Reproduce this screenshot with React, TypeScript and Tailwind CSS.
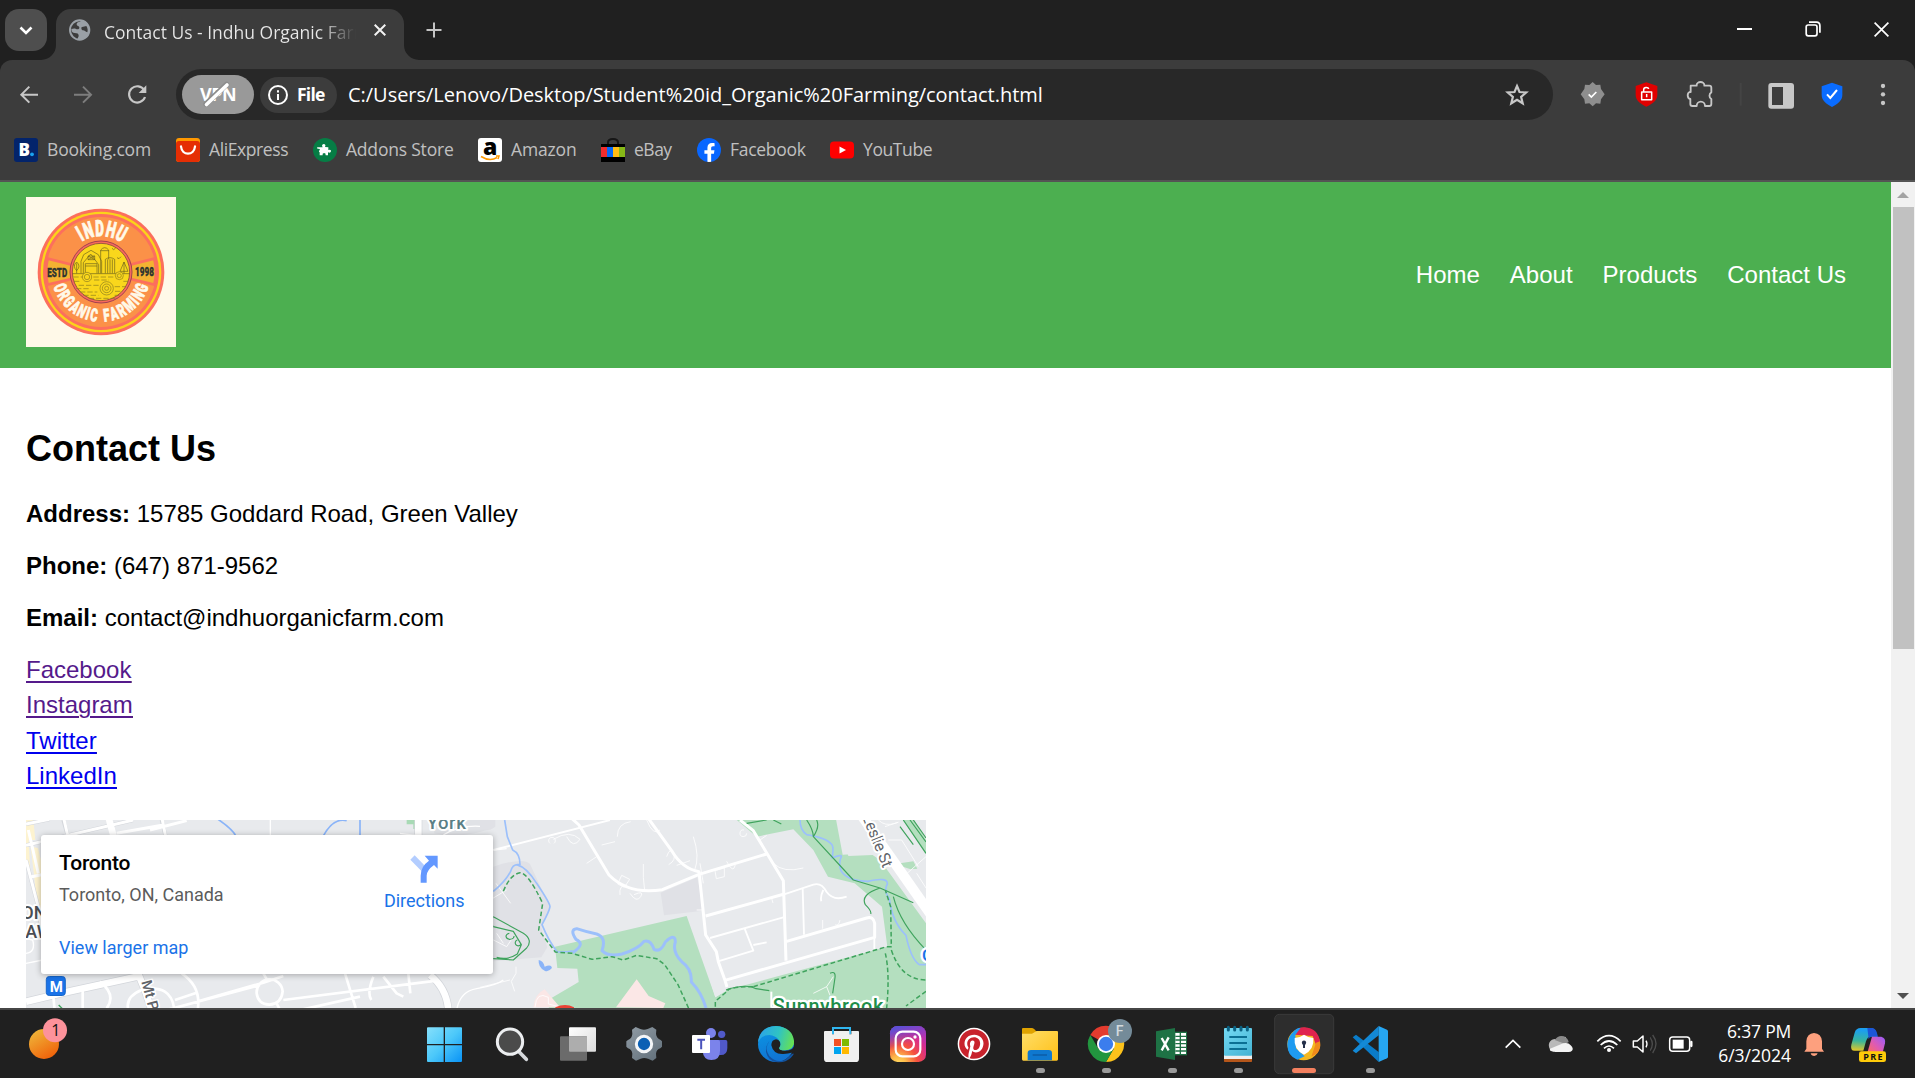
import type { ReactNode } from "react";
import { FaFacebookF, FaPinterest } from "react-icons/fa";

function Cell({ x, y = 30, w = 198, h = 204, className, children }: { x: number; y?: number; w?: number; h?: number; className: string; children: ReactNode }) {
  return (
    <svg viewBox={`${x} ${y} ${w} ${h}`} className={`block shrink-0 ${className}`} fill="none">
      {children}
    </svg>
  );
}

function TabStrip() {
  return (
    <div className="flex h-[60px] bg-[#202020] pl-[5px] pt-[9px]">
      <div className="flex h-[42px] w-[42px] items-center justify-center rounded-[14px] bg-[#4e4e4e]">
        <svg viewBox="0 0 14 9" className="h-[9px] w-[14px]" fill="none" stroke="#fff" strokeWidth="2.6"><path d="M1.5 1.5 7 7l5.500-5.500" /></svg>
      </div>
      <div className="relative ml-[9px] flex h-[51px] w-[348px] items-start rounded-t-[15px] bg-[#3c3c3c]">
        <svg viewBox="0 0 15 15" className="absolute -left-[15px] bottom-0 h-[15px] w-[15px]" fill="#3c3c3c"><path d="M15 0v15H0A15 15 0 0 0 15 0Z" /></svg>
        <svg viewBox="0 0 15 15" className="absolute -right-[15px] bottom-0 h-[15px] w-[15px]" fill="#3c3c3c"><path d="M0 0v15h15A15 15 0 0 1 0 0Z" /></svg>
        <svg viewBox="208 57 66 66" className="ml-[13px] mt-[10px] h-[22px] w-[22px]" fill="none">
          <circle cx="240" cy="90" r="29" stroke="#9aa0a6" strokeWidth="6" />
          <path d="M247 61c-4 6-16 4-16 12 0 6 8 4 8 10 0 5-6 6-10 4-5-3-9-1-14 0 0 8 4 12 10 12 8 0 12 2 12 8 0 4-4 6-3 12 20 2 35-12 35-29s-8-26-22-29Zm0 20c5 0 9-3 13-3 4 5 5 14 3 19-6-2-8-6-13-6-4 0-7-8-3-10Z" fill="#9aa0a6" />
        </svg>
        <div className="ml-[13px] mt-[9px] h-[30px] w-[252px] overflow-hidden whitespace-nowrap bg-gradient-to-r from-[#e8e8e8] from-85% to-transparent to-100% bg-clip-text text-[17.5px] leading-[28px] text-transparent">
          Contact Us - Indhu Organic Farm
        </div>
        <svg viewBox="0 0 12 12" className="ml-[18px] mt-[15px] h-[12px] w-[12px]" stroke="#f2f2f2" strokeWidth="2"><path d="m.7.7 10.600 10.600M11.300.7.7 11.300" /></svg>
      </div>
      <svg viewBox="0 0 16 16" className="ml-[22px] mt-[13px] h-[16px] w-[16px]" stroke="#c4c4c4" strokeWidth="2"><path d="M8 .5v15M.5 8h15" /></svg>
      <div className="ml-auto mr-[26px] mt-[11px] flex h-[18px] items-center gap-[53px] text-white">
        <svg viewBox="0 0 15 16" className="h-[16px] w-[15px]" stroke="currentColor" strokeWidth="2"><path d="M0 8h15" /></svg>
        <svg viewBox="0 0 16 16" className="h-[16px] w-[16px]" stroke="currentColor" strokeWidth="1.7" fill="none"><rect x="1.200" y="4" width="10.800" height="10.800" rx="2" /><path d="M4 1.200h7.500A3.500 3.500 0 0 1 14.900 4.700v7" /></svg>
        <svg viewBox="0 0 15 15" className="h-[15px] w-[15px]" stroke="currentColor" strokeWidth="1.7"><path d="m.6.6 13.800 13.800M14.400.6.6 14.400" /></svg>
      </div>
    </div>
  );
}

function Toolbar() {
  return (
    <div className="flex h-[69px] rounded-t-[12px] bg-[#3c3c3c]">
      <Cell x={0} y={180} w={195} h={207} className="h-[69px] w-[65px]"><path d="M114 284H66M88 260l-24 24 24 24" stroke="#c7c7c7" strokeWidth="6" /></Cell>
      <Cell x={195} y={180} w={150} h={207} className="h-[69px] w-[50px]"><path d="M222 284h48M249 260l24 24-24 24" stroke="#7d7d7d" strokeWidth="6" /></Cell>
      <Cell x={345} y={180} w={183} h={207} className="h-[69px] w-[61px]"><path d="M433 271a24.500 24.500 0 1 0 2 20" stroke="#c7c7c7" strokeWidth="6.500" /><path d="M439 256v23h-23Z" fill="#c7c7c7" /></Cell>
      <div className="mt-[9px] flex h-[51px] w-[1377px] items-center rounded-full bg-[#282828] pl-[6px]">
        <div className="relative flex h-[39px] w-[72px] items-center justify-center rounded-full bg-[#999] text-[18px] font-bold tracking-[-0.55px] text-white">
          VPN
          <svg viewBox="0 0 72 39" className="absolute inset-0 h-full w-full" strokeLinecap="round"><path d="M24 29 44.500 9.500" stroke="#8c8c8c" strokeWidth="5.500" /><path d="M24.500 29.500 45 10" stroke="#fff" strokeWidth="3.600" /></svg>
        </div>
        <div className="ml-[6px] flex h-[36px] w-[77px] items-center gap-[9px] rounded-full bg-[#3c3c3c] pl-[8px]">
          <svg viewBox="0 0 20 20" className="h-5 w-5" fill="none" stroke="#fff" strokeWidth="2"><circle cx="10" cy="10" r="9" /><path d="M10 9v6M10 5.200v2.200" /></svg>
          <span className="text-[17.5px] font-bold tracking-[-0.78px] text-white">File</span>
        </div>
        <span className="ml-[11px] whitespace-nowrap text-[20px] tracking-[-0.03px] text-white">C:/Users/Lenovo/Desktop/Student%20id_Organic%20Farming/contact.html</span>
        <svg viewBox="0 0 24 24" className="ml-auto mr-[24px] h-[24px] w-[24px]" fill="none" stroke="#c7c7c7" strokeWidth="2.200"><path d="m12 3 2.500 6 6.700.5-5.100 4.300 1.600 6.500L12 16.800l-5.700 3.500 1.600-6.500L2.800 9.500 9.500 9Z" /></svg>
      </div>
      <div className="ml-[13px] flex">
        <Cell x={228} y={0} w={162} h={207} className="h-[69px] w-[54px]">
          <path d="m308 66 10 9 13-1 2 13 11 16-11 15-2 13-13-1-10 9-10-9-13 1-2-13-11-15 11-16 2-13 13 1Z" fill="#8e8e8e" />
          <path d="m296 103 8 8 15-15" stroke="#fff" strokeWidth="5" />
        </Cell>
        <Cell x={390} y={0} w={162} h={207} className="h-[69px] w-[54px]">
          <path d="m469 67 33 11v26c0 18-16 28-33 36-17-8-32-18-32-36V78Z" fill="#e00000" />
          <path d="M455 96h30v23h-30ZM461 96v-7c0-8 14-8 15-2M470 102v10" stroke="#fff" strokeWidth="4.500" strokeLinejoin="round" />
        </Cell>
        <Cell x={555} y={0} w={162} h={207} className="h-[69px] w-[54px]">
          <path d="M605 77h18v-2a11.500 9 0 0 1 23 0v2h15q6 0 6 6v14a9.500 11 0 0 0 0 20v15q0 6-6 6h-13a11.500 12 0 0 0-25 0h-13q-6 0-6-6v-15a9.500 11 0 0 1-2-21h3Z" stroke="#c7c7c7" strokeWidth="5.500" strokeLinejoin="round" />
        </Cell>
        <Cell x={714} y={0} w={78} h={207} className="h-[69px] w-[26px]"><path d="M752 69v68" stroke="#444" strokeWidth="6" /></Cell>
        <Cell x={792} y={0} w={162} h={207} className="h-[69px] w-[54px]"><rect x="835" y="69" width="77" height="77" rx="9" fill="#c7c7c7" /><path d="M846 81h33v54h-33Z" fill="#3c3c3c" /></Cell>
        <Cell x={954} y={0} w={144} h={207} className="h-[69px] w-[48px]"><path d="m1026 68 31 11v26c0 16-13 26-31 36-18-10-31-20-31-36V79Z" fill="#0a6cff" /><path d="m1011 103 10 11 20-24" stroke="#fff" strokeWidth="6" /></Cell>
        <Cell x={1098} y={0} w={162} h={207} className="h-[69px] w-[54px]"><g fill="#c7c7c7"><circle cx="1179" cy="78" r="6.500" /><circle cx="1179" cy="103" r="6.500" /><circle cx="1179" cy="129" r="6.500" /></g></Cell>
      </div>
    </div>
  );
}

const bookmarks: { label: string; style: string; icon: ReactNode }[] = [
  { label: "Booking.com", style: "w-[104px] tracking-[-0.175px]", icon: <svg viewBox="0 0 24 24" className="h-6 w-6"><rect width="24" height="24" rx="3" fill="#03246b" /><text x="4.500" y="18" fontFamily="Open Sans" fontWeight="800" fontSize="17" fill="#fff">B</text><circle cx="18" cy="16.300" r="1.900" fill="#19a3f0" /></svg> },
  { label: "AliExpress", style: "w-[79px] tracking-[-0.4px]", icon: <svg viewBox="0 0 24 24" className="h-6 w-6"><rect width="24" height="24" rx="3" fill="#ff9800" /><path d="M0 6q0-3 3-3h18q3 0 3 3v15q0 3-3 3H3q-3 0-3-3Z" fill="#e52e04" /><path d="M5 8.500c1 9.500 13 9.500 14 0" stroke="#fff" strokeWidth="2.300" fill="none" strokeLinecap="round" /></svg> },
  { label: "Addons Store", style: "w-[107px] tracking-[-0.2px]", icon: <svg viewBox="939 414 72 72" className="h-6 w-6"><circle cx="975" cy="450" r="36" fill="#067d45" /><path d="M968 441q-5-8 3-10 8 1 4 9l10 1v8q9-3 8 4-2 7-9 3v9h-7q1-7-5-7-6 1-4 7h-9v-9q-5-4 1-7-1-5-7-3l-2-5Z" fill="#fff" transform="translate(0 1)" /></svg> },
  { label: "Amazon", style: "w-[65px] tracking-[-0.15px]", icon: <svg viewBox="0 0 24 24" className="h-6 w-6"><rect width="24" height="24" rx="3" fill="#fff" /><text x="5" y="17" fontFamily="Open Sans" fontWeight="800" fontSize="23">a</text><path d="M3 18.500q9 5.500 16 1M18 18h3l-1 3" stroke="#ff9900" strokeWidth="1.500" fill="none" /></svg> },
  { label: "eBay", style: "w-[38px] tracking-[-0.5px]", icon: <svg viewBox="0 0 24 24" className="h-6 w-6"><path d="M7 6.500V4.500q0-3.500 5-3.500t5 3.500v2" stroke="#161616" strokeWidth="2" fill="none" /><path d="M0 6h24v18H0Z" fill="#000" /><path d="M0 9h6v10H0Z" fill="#f12c2d" /><path d="M6 9h6v10H6Z" fill="#0968f6" /><path d="M12 9h6v10h-6Z" fill="#ffbd14" /><path d="M18 9h6v10h-6Z" fill="#86b817" /></svg> },
  { label: "Facebook", style: "w-[75px] tracking-[-0.3px]", icon: <span className="flex h-6 w-6 items-end justify-center overflow-hidden rounded-full bg-[#0866ff] text-[19px] text-white"><FaFacebookF /></span> },
  { label: "YouTube", style: "w-[69px] tracking-[-0.4px]", icon: <svg viewBox="0 0 24 24" className="h-6 w-6"><rect y="3.500" width="24" height="17" rx="4" fill="#f00" /><path d="m9.500 8.500 6.500 3.500-6.500 3.500Z" fill="#fff" /></svg> },
];

function Bookmarks() {
  return (
    <div className="flex h-[53px] items-start gap-[25px] border-b-2 border-[#545454] bg-[#3c3c3c] pl-[14px] pt-[9px]">
      {bookmarks.map((b) => (
        <div key={b.label} className="flex h-6 items-center gap-[9px]">
          {b.icon}
          <span className={`whitespace-nowrap pb-[2px] text-[17.5px] text-[#c0c0c0] ${b.style}`}>{b.label}</span>
        </div>
      ))}
    </div>
  );
}

const topLetters: [string, number][] = [["I", -29], ["N", -17], ["D", -2], ["H", 13.5], ["U", 28]];
const bottomText = "ORGANIC FARMING";
const advance: Record<string, number> = { I: 0.55, " ": 0.6, M: 1.25, F: 0.9 };
const bottomLetters = (() => {
  const widths = [...bottomText].map((c) => advance[c] ?? 1);
  const total = widths.reduce((a, b) => a + b, 0);
  let at = 0;
  return [...bottomText].map((c, i) => {
    const mid = at + widths[i] / 2;
    at += widths[i];
    return { c, angle: (mid / total - 0.5) * 148 };
  });
})();

function Logo() {
  return (
    <svg viewBox="78 51 450 450" className="block h-[150px] w-[150px] bg-[#fff9e8]" fill="none" fontFamily="Roboto" fontWeight="900">
      <circle cx="303" cy="276" r="190" fill="#fc6f5d" />
      <circle cx="303" cy="276" r="181" fill="#fbd31a" />
      <circle cx="303" cy="276" r="174" fill="#fc6f5d" />
      <circle cx="303" cy="276" r="165" fill="#fb9148" />
      <path d="M143 236 303 276 143 314a165 165 0 0 1 0-78ZM463 236 303 276l160 38a165 165 0 0 0 0-78Z" fill="#f3b232" stroke="#fc6f5d" strokeWidth="8" />
      <circle cx="303" cy="276" r="93" fill="#f96a5c" stroke="#a34050" strokeWidth="3" />
      <circle cx="303" cy="276" r="86" fill="#f9d71c" stroke="#8a4a3c" strokeWidth="2.500" />
      <g stroke="#8a7a20" strokeWidth="2">
        <path d="M218 281h170M243 280v-36l8-20 22-13 22 13 10 20v36M250 280v-32l22-26 24 32v26M256 280v-29h35v29M256 258h35M264 228h20v11h-20ZM264 228l20 11M284 228l-20 11M302 232v-22q12-14 24 0v28M302 232v48M302 212h24M316 280v-42q14-10 28 0v42M323 238v42M330 238v42M337 238v42M230 280v-30M230 246q-14 12 0 26q14-14 0-26M372 246l-12 28h24ZM372 246v34M336 205l5 4 6-5M351 233l6 3 6-6" stroke="#6b601d" />
        <path d="M220 291h30M280 291h60M222 304h20M282 300h45M370 304h14M236 316h60M344 320h32M228 326h40M240 336h52M345 334h20M250 346h45M344 346h14M266 355h80" strokeDasharray="16 6" />
        <g fill="#f9d71c"><circle cx="261" cy="291" r="14" /><circle cx="261" cy="291" r="8" /><circle cx="358" cy="287" r="12" /><circle cx="358" cy="287" r="6" /><circle cx="320" cy="325" r="20" /><circle cx="320" cy="325" r="13" /><circle cx="320" cy="325" r="6" /></g>
      </g>
      <g fill="#fff9e8" stroke="#fff9e8" strokeWidth="2.500" textAnchor="middle">
        {topLetters.map(([c, angle]) => (
          <text key={c} fontSize="67" transform={`rotate(${angle} 303 276) translate(303 168) scale(.6 1)`}>{c}</text>
        ))}
        {bottomLetters.map(({ c, angle }, i) => (
          <text key={i} fontSize="53" transform={`rotate(${-angle} 303 276) translate(303 425) scale(.62 1)`}>{c}</text>
        ))}
      </g>
      <text transform="translate(142 292) scale(.62 1)" fontSize="39" fill="#2d3430" stroke="#2d3430">ESTD</text>
      <text transform="translate(405 289) scale(.66 1)" fontSize="37" fill="#2d3430" stroke="#2d3430">1998</text>
    </svg>
  );
}

function MapEmbed() {
  return (
    <div className="relative mt-[26.400px] h-[188px] w-[900px] overflow-hidden bg-[#e8eaed] font-[Roboto]">
      <svg viewBox="0 0 900 188" className="block h-[188px] w-[900px]" fill="none" strokeLinejoin="round">
        <g transform="translate(-26 -20) scale(.33333)">
          <path d="M78 60h22l6 60h-20l4 80-12 4ZM92 140l22 4 12 50v140l-14-10-10-100Z" fill="#fdf3d0" />
          <path d="M1220 60h34l-2 27h-12v-14h-20Z" fill="#a8dab5" />
          <path d="M1300 60h185l-2 20q-90 40-180 20Z" fill="#e0e2e6" />
          <g stroke="#d3d6db" strokeWidth="12">
            <path d="M78 605 200 576 420 528M410 510l26 64 20 60M1255 50v60M1290 525q50 40 55 105" strokeWidth="24" />
            <path d="M78 136 400 60M78 72l70-14M190 60l14 50M325 60l16 50M485 60l12 50M78 180l34 130 14 80" />
          </g>
          <g stroke="#fff">
            <path d="M78 605 200 576 420 528M410 510l26 64 20 60M1255 50v60M1290 525q50 40 55 105M325 50l16 60" strokeWidth="20" />
            <path d="M78 136 400 60M78 72l70-14M190 50l14 60M485 50l12 60M78 180l34 130 14 80M85 90l30 130M95 230l30-6M450 90l110-28M350 100l140-25" strokeWidth="9" />
            <path d="M160 590l4 40M248 565v65M300 545q50 40 20 80M385 630q-10-40 40-60 90-20 98 60M525 600l65-22M545 520q60 40 48 110M597 603 790 548 850 528M500 630 780 555M850 600 1310 542M770 580a39 39 0 1 1 78-6q-4 38-40 40-34-2-38-34ZM790 520l14 24M830 610l10 20M1035 520l32 104M1120 530q-20 50-6 70M1150 530l40 50 20 10M1225 520l6 60M900 630l180-40" strokeWidth="8" />
            <path d="M1370 630q10-56 60-64 60-10 80-26M78 460q30-4 20-40l-20-4M78 490l50-10M811 60v50M1330 105q50-30 110-26M1200 100q50 8 60 4M1480 150l40-4" strokeWidth="4" />
          </g>
          <path d="M650 55q50 34 58 54M970 108q30-56 70-46M1080 60v50M1480 274l24-22" stroke="#8ab4f8" strokeWidth="5" />
          <path d="M1480 350l24 12M1480 378h20M1480 476h20M176 615l14 14" stroke="#3fa35d" strokeWidth="4" />
        </g>
        <g transform="translate(454 -20) scale(.33333)">
          <path d="M40 200q90-30 110-8l60 130-26 60 18 60-18 30-144 12Z" fill="#e0e1e6" />
          <path d="m542 278 110-46 18 100-118 14ZM0 60h46v20q-20 16-46 8Z" fill="#e0e1e6" />
          <path d="M225 440 620 348l86 244 36-22 480-130-16-120-82-70-80-20-44-80-60-62-110 22-62-52h300l20 106 82-4 30 20 160 220v266H240l-46-60 102-60-4-40-60-2Z" fill="#b4dfbf" />
          <path d="M1080 56h75l80 110-40-2-90 4Z" fill="#e8eaed" />
          <path d="m645 392 61 200 32-20-26-80-2-40Z" fill="#e8eaed" />
          <path d="M1180 60h160v260l-60-90-30-26-60-120Z" fill="#e8eaed" />
          <path d="M1200 100l60 90 40-6 12 22-20 2-30-10-30-8Z M1268 60h34l36 60v42Z" fill="#b4dfbf" />
          <path d="M194 568l46 54h-80q4-40 34-54ZM408 622l62-84 36 50 50 22-6 14Z" fill="#fbe7e6" />
          <g stroke="#fff">
            <path d="M275 55l22 20 90 150q60 60 160 44l110-46M505 55l72 100q30 50 80 60l20 190 32 50 6 30 20 56 6 20M657 223 860 162M780 60l40 32 90 150 8 240M677 348l236-66M920 424l240-70q20-6 24 16v42L732 542" strokeWidth="9" />
            <path d="M40 150 390 60M690 414l220-62M714 484l106-32-26-66M820 435l40-8M968 264l4 140M910 284l90-30q24-8 40 22 20 28 60 14M1030 270q-10 20-6 34M1183 412v36" strokeWidth="5.500" />
            <path d="M320 190 350 170M210 130a10 10 0 1 1 12 0M220 118q50-30 80 0-20 30-40-8M500 60q20 50 40 30M365 135l40-10M412 110q0-40 40-45M560 170q10-30 20-10t-14 34M590 196q30-10 40-14M425 226l24 12-16 24-20-10ZM420 285q-4-30 20-30M450 280q20 30 32 10t-20-6M490 192q-2 40 4 80M705 212l28-8v26l-24 6ZM740 184q20 40 26 10M640 110q20 60 4 100M660 190l10 60M800 100a10 10 0 1 1-8-10M840 120l20-14M880 190q30 30 90 14M650 330h20M875 295l4 14M1028 360v26M1080 360q-4 20-14 14M48 250l44 60M30 300l50-30M0 562l90-22M108 500v20l-14 24 10 30M1195 60q20 20 50 10t-30 10M1225 120h40l50 80M1270 230l68-60M1310 220l28 44M165 622q4-50 40-30v20l40 10M40 420l40 20 20-30M50 400l20 30M1000 580l40-20 20-30M1040 560l10 26" strokeWidth="3" opacity=".8" />
            <path d="M1140 40 1350 340" strokeWidth="30" />
          </g>
          <path d="M74 60l8 50 16 40q22 10 22 44-22-4-28 20-16 30-52 60M110 194q30 8 60 56 40 60 40 70-2 14-24 54 20 50 46 82 40 0 46-4M960 60q0 30 20 44 60 10 76 30 6 10 0 40 30-12 28-4-10 20 0 44 20 30 80 30 60-14 58 8-12 20 6 44 8 70 50 110 14 70 40 88h22" stroke="#9cc0fb" strokeWidth="5" />
          <path d="M278 458q40-26 10-40-20-30 2-32 30 10 60 16 30 10 16 50 20 20 60 10 50-16 66-38 20-6 30 24 20 10 34-22 30-28 30 0-10 30 20 60 30 20 28 60 30 30 44 78" stroke="#9cc0fb" strokeWidth="9" />
          <path d="M176 480q14 2 18 20 20-8 22 4-12 14-22 8-20-10-18-32Z" fill="#8ab4f8" />
          <g stroke="#3fa35d" strokeWidth="3.500">
            <path d="M800 70l60-10M880 60l24 12M980 60q20 30 20 50l120 130 80 24 100 44M1010 60q10 20-10 50M1200 264q-60 20-44 50 20 20 16 28M1240 290q20 80 98 160M1270 60l68 100M1290 60l48 66M1300 60l38 54M1260 80l40 54M40 350l90 50q30 20 10 44l-40 36-60-4M40 380l60 14 24 40-12 28q-30 20-62 10M88 400a12 9 0 1 0 14 8M112 420a9 9 0 1 0 10 14M738 570q60-20 90-4l40 6M1050 520q20-10 14 20l-6 40" />
            <path d="M70 274q20-50 50-56 24 0 68 92l-12 80 50 66 50 4 60 18 60-8 34 10 40-14 60 10 24 18 40 60 36 80M706 620v-16l40-34M820 560l400-120h14l-2-120-16-50M1216 460q14 60 4 164M1234 450q30 90 104 90M1338 574l-60 44M740 570q20-10 80-10" strokeDasharray="14 8" strokeWidth="4.500" />
          </g>
          <path d="M226 622q30-14 56 0v14h-56Z" fill="#ea4335" />
          <path d="M874 575v48" stroke="#fff" strokeWidth="6" />
          <g stroke="#fff" strokeWidth="14" paintOrder="stroke" fontWeight="500">
            <text x="878" y="640" fontSize="60" fill="#1e8e4a" textLength="332">Sunnybrook</text>
            <text transform="translate(1146 50) rotate(68)" fontSize="48" fill="#5f6368" strokeWidth="12" fontWeight="400" textLength="168">Leslie St</text>
            <text x="1326" y="484" fontSize="52" fill="#1a73e8">C</text>
          </g>
        </g>
        <g transform="translate(-26 -20) scale(.33333)" stroke="#fff" strokeWidth="12" paintOrder="stroke" fontWeight="500">
          <text x="1280" y="86" fontSize="56" fill="#5b7f86" textLength="118">York</text>
          <text x="64" y="356" fontSize="54" fill="#4a4d52">ON</text>
          <text x="76" y="413" fontSize="54" fill="#4a4d52">AW</text>
          <text transform="translate(424 545) rotate(75)" fontSize="44" fill="#5f6368" strokeWidth="9">Mt Pl</text>
        </g>
        <rect x="20.300" y="156.500" width="19" height="19" rx="3" fill="#1a73e8" stroke="#1766ca" />
        <text x="23.800" y="171.500" fontSize="15" fontWeight="700" fill="#fff">M</text>
      </svg>
      <div className="absolute left-[15px] top-[15px] flex h-[139px] w-[452px] justify-between rounded-[3px] bg-white pl-[18px] shadow-[0_1px_6px_rgba(0,0,0,0.3)]">
        <div className="flex flex-col items-start whitespace-nowrap text-[18px] leading-[26px]">
          <div className="mt-[15px] text-[21px] font-medium tracking-[-0.2px] text-black">Toronto</div>
          <div className="mt-[6px] text-[#5b5b5b]">Toronto, ON, Canada</div>
          <div className="mt-[27px] text-[#1a73e8]">View larger map</div>
        </div>
        <div className="mr-[28.500px] flex flex-col items-center">
          <svg viewBox="1231 166 84 84" className="mt-[20px] h-[28px] w-[28px]">
            <path d="m1245 167 32 33-8 18-37-38Z" fill="#b3cdff" />
            <path d="M1275 168h39v39l-11-11q-22 16-22 32v21h-18v-21q0-28 25-45Z" fill="#6398ff" />
          </svg>
          <div className="mt-[5px] text-[18px] leading-[26px] tracking-[-0.036px] text-[#1a73e8]">Directions</div>
        </div>
      </div>
    </div>
  );
}

function Page() {
  return (
    <div className="flex h-[826px] overflow-hidden bg-white font-['Liberation_Sans',Arial,sans-serif]">
      <div className="w-[1891px] text-[24px] text-black">
        <header className="flex h-[186px] justify-between bg-[#4caf50] pl-[26px] pr-[45px] pt-[15px]">
          <Logo />
          <nav className="mt-[64px] flex h-[28px] gap-[30px] leading-[28px] text-white">
            <a>Home</a><a>About</a><a>Products</a><a>Contact Us</a>
          </nav>
        </header>
        <main className="pl-[26px] pt-[61px]">
          <h1 className="h-[40px] text-[36px] font-bold leading-[40px]">Contact Us</h1>
          <div className="mt-[31px] flex flex-col gap-[24px] leading-[28px]">
            <p><b>Address:</b> 15785 Goddard Road, Green Valley</p>
            <p><b>Phone:</b> (647) 871-9562</p>
            <p><b>Email:</b> contact@indhuorganicfarm.com</p>
          </div>
          <div className="mt-[20px] flex flex-col items-start leading-[35.400px] underline decoration-2 underline-offset-[3px]">
            <a className="text-[#551a8b]">Facebook</a>
            <a className="text-[#551a8b]">Instagram</a>
            <a className="text-[#0000ee]">Twitter</a>
            <a className="text-[#0000ee]">LinkedIn</a>
          </div>
          <MapEmbed />
        </main>
      </div>
      <div className="flex w-[24px] flex-col items-center bg-[#f1f1f1]">
        <svg viewBox="0 0 12 6" className="mt-[10px] h-[6px] w-[12px]" fill="#a3a3a3"><path d="M0 6 6 0l6 6Z" /></svg>
        <div className="mt-[9px] h-[442px] w-[21px] bg-[#c1c1c1]" />
        <svg viewBox="0 0 12 6" className="mb-[9px] mt-auto h-[6px] w-[12px]" fill="#505050"><path d="M0 0l6 6 6-6Z" /></svg>
      </div>
    </div>
  );
}

const cell = "h-[68px] w-[66px]";
const Dot = ({ x }: { x: number }) => <rect x={x} y="204" width="27" height="15" rx="7.500" fill="#9a9a9a" />;

function TaskIcons() {
  return (
    <div className="flex">
      <Cell x={39} className={cell}>
        <linearGradient id="win" x1="81" y1="82" x2="185" y2="186" gradientUnits="userSpaceOnUse"><stop stopColor="#86e0fb" /><stop offset=".5" stopColor="#4cc8fa" /><stop offset="1" stopColor="#0a93f5" /></linearGradient>
        <path d="M84 82h47v50H81V85q0-3 3-3ZM135 82h48q3 0 3 3v47h-51ZM81 136h50v50H84q-3 0-3-3ZM135 136h51v47q0 3-3 3h-48Z" fill="url(#win)" />
      </Cell>
      <Cell x={237} className={cell}>
        <path d="m357 155 22 23" stroke="#d5d8dc" strokeWidth="11" strokeLinecap="round" /><circle cx="330" cy="125" r="38" fill="#4b4b4b" stroke="#eceef0" strokeWidth="9" />
      </Cell>
      <Cell x={435} className={cell}>
        <linearGradient id="tv" x1="507" y1="82" x2="588" y2="155" gradientUnits="userSpaceOnUse"><stop stopColor="#fff" /><stop offset="1" stopColor="#dcdcdc" /></linearGradient>
        <rect x="507" y="82" width="81" height="73" rx="3" fill="url(#tv)" /><rect x="480" y="109" width="81" height="73" rx="3" fill="#6b6b6b" /><path d="M507 109h51q3 0 3 3v43h-51q-3 0-3-3Z" fill="#adadad" />
      </Cell>
      <Cell x={633} className={cell}>
        <linearGradient id="gear" x1="690" y1="82" x2="770" y2="182" gradientUnits="userSpaceOnUse"><stop stopColor="#8f9aa3" /><stop offset="1" stopColor="#63717c" /></linearGradient>
        <path d="m707 81 14 6q11 4 22 0l14-6 12 8-1 13q2 14 14 18l4 4v16l-5 5q-12 4-13 16l1 13-11 8-14-6q-12-4-22 0l-14 6-12-8 1-13q-1-12-13-16l-5-5v-16l5-4q12-5 13-18l-1-13Z" fill="url(#gear)" />
        <circle cx="732" cy="132" r="23" fill="#0b60b4" stroke="#f4f6f8" strokeWidth="9" />
      </Cell>
      <Cell x={831} className={cell}>
        <circle cx="933" cy="99" r="15" fill="#7b83eb" /><circle cx="965" cy="103" r="11" fill="#5059c9" /><path d="M950 120h27q5 0 5 5v18q0 22-20 22-12 0-12-10Z" fill="#5059c9" /><path d="M908 120h47q5 0 5 5v27q0 28-26 28-24 0-26-26Z" fill="#7b83eb" />
        <rect x="876" y="105" width="54" height="54" rx="3" fill="#fff" /><path d="M892 119h23M903.500 119v29" stroke="#4b53bc" strokeWidth="6" />
      </Cell>
      <Cell x={1029} className={cell}>
        <linearGradient id="e1" x1="1080" y1="100" x2="1182" y2="130" gradientUnits="userSpaceOnUse"><stop stopColor="#2ba6e6" /><stop offset=".5" stopColor="#2fc3c4" /><stop offset="1" stopColor="#6be34b" /></linearGradient>
        <linearGradient id="e2" x1="1090" y1="110" x2="1110" y2="186" gradientUnits="userSpaceOnUse"><stop stopColor="#0c8ee0" /><stop offset="1" stopColor="#1173d2" /></linearGradient>
        <circle cx="1128" cy="132" r="54" fill="url(#e2)" />
        <path d="M1108 124q-16 22 0 44 20 22 46 12l22-18q12-6-4 12-18 16-44 12-24-4-30-30 0-22 10-32Z" fill="#1353a0" />
        <path d="M1074 128q4-48 54-50 50 4 54 46 0 26-28 27-18 0-16-8 10-10-2-24-10-12-28-14-24 0-34 23Z" fill="url(#e1)" />
        <path d="M1184 132q-2 20-28 20-20-1-18-9 6-8 2-17-4-7-12-8-14 2-14 18 6 28 36 26 16-2 24-4l10 2Z" fill="#202020" />
        <path d="M1182 124q0 26-28 27-18 0-16-8 8-12 0-24l20-14Z" fill="url(#e1)" />
      </Cell>
      <Cell x={1227} className={cell}>
        <path d="M1299 103V84h51v19" stroke="#30b6f0" strokeWidth="6" />
        <path d="M1275 93h21v10h6V93h46v10h6V93h20q3 0 3 3v80q0 10-10 10h-85q-10 0-10-10V96q0-3 3-3Z" fill="#f0f0f0" />
        <path d="M1302 117h21v21h-21Z" fill="#f25022" /><path d="M1326 117h21v21h-21Z" fill="#7fba00" /><path d="M1302 141h21v21h-21Z" fill="#00a4ef" /><path d="M1326 141h21v21h-21Z" fill="#ffb900" />
      </Cell>
      <Cell x={-15} className={cell}>
        <linearGradient id="ig2" x1="60" y1="78" x2="80" y2="130" gradientUnits="userSpaceOnUse"><stop stopColor="#5b50d6" /><stop offset="1" stopColor="#5b50d6" stopOpacity="0" /></linearGradient>
        <radialGradient id="ig" cx="55" cy="192" r="115" gradientUnits="userSpaceOnUse"><stop stopColor="#ffdc62" /><stop offset=".2" stopColor="#fdba4a" /><stop offset=".5" stopColor="#f5503e" /><stop offset=".8" stopColor="#d92d8c" /><stop offset="1" stopColor="#b233b5" /></radialGradient>
        <rect x="30" y="78" width="108" height="108" rx="22" fill="url(#ig)" /><rect x="30" y="78" width="108" height="108" rx="22" fill="url(#ig2)" />
        <g stroke="#fff" strokeWidth="6.500"><rect x="47" y="95" width="74" height="74" rx="20" /><circle cx="84" cy="132" r="18" /></g><circle cx="105" cy="111" r="5" fill="#fff" />
      </Cell>
      <Cell x={183} className={cell}>
        <circle cx="282" cy="132" r="49" fill="#fff" />
        <FaPinterest x={236} y={86} size={92} color="#c8232c" />
      </Cell>
      <Cell x={381} className={cell}>
        <linearGradient id="fold" x1="440" y1="95" x2="510" y2="180" gradientUnits="userSpaceOnUse"><stop stopColor="#ffdc62" /><stop offset="1" stopColor="#ffc320" /></linearGradient>
        <path d="M429 84h26q4 0 8 4l8 8v14h-45V87q0-3 3-3Z" fill="#e0a300" /><path d="M426 101h30l14-8h61q3 0 3 3v82q0 4-4 4H430q-4 0-4-4Z" fill="url(#fold)" />
        <path d="M443 181v-21q0-10 10-10h53q10 0 10 10v21Z" fill="#0f78cf" /><path d="M458 165h43" stroke="#0a4f93" strokeWidth="3" /><Dot x={468} />
      </Cell>
      <Cell x={579} className={cell}>
        <path d="M678 132 631 105a54 54 0 0 1 94 0Z" fill="#e33b2e" /><path d="M678 105h47a54 54 0 0 1-47 81l23-40Z" fill="#fcc21b" /><path d="M655 146 631 105a54 54 0 0 0 47 81l23-40Z" fill="#22963f" />
        <circle cx="678" cy="132" r="27" fill="#fff" /><circle cx="678" cy="132" r="21.500" fill="#3b7ded" />
        <circle cx="720" cy="93" r="36" fill="#748b99" /><text x="707" y="108" fontFamily="Roboto" fontSize="42" fontWeight="500" fill="#d3dade">F</text><Dot x={666} />
      </Cell>
      <Cell x={777} className={cell}>
        <path d="M880 95h41v71h-41Z" fill="#1e6f43" /><path d="M886 99h32v63h-32Z" fill="#fff" /><path d="M886 109h32M886 120h32M886 131h32M886 142h32M886 153h32M901 99v63" stroke="#1e6f43" strokeWidth="4" />
        <path d="m828 94 57-10v96l-57-10Z" fill="#1e7245" /><path d="m845 114 21 37M866 112l-21 39" stroke="#fff" strokeWidth="7" /><Dot x={864} />
      </Cell>
      <Cell x={975} className={cell}>
        <linearGradient id="note" x1="1040" y1="84" x2="1110" y2="170" gradientUnits="userSpaceOnUse"><stop stopColor="#72d8f2" /><stop offset="1" stopColor="#44b3d3" /></linearGradient>
        <path d="M1032 168h84v16q0 2-2 2h-80q-2 0-2-2Z" fill="#b5561a" /><path d="M1032 164h84v13h-84Z" fill="#f0efee" /><rect x="1032" y="84" width="84" height="83" rx="3" fill="url(#note)" />
        <path d="M1048 111h53M1048 129h53M1048 147h53" stroke="#0b6f93" strokeWidth="5.500" /><path d="M1045 82v8M1064 82v8M1083 82v8M1102 82v8" stroke="#0b6283" strokeWidth="9" strokeLinecap="round" /><Dot x={1062} />
      </Cell>
      <Cell x={1173} className={cell}>
        <rect x="1184" y="43" width="177" height="178" rx="14" fill="#2d2d2d" stroke="#3a3a3a" strokeWidth="3" />
        <circle cx="1271" cy="132" r="49" fill="#f4b81f" />
        <path d="M1238 98q14-16 36-16 40 2 46 44l-12 8-10-26-54-4Z" fill="#e0234e" />
        <path d="M1240 95q10-12 22-12l-16 22 2 40 26 24-22 10q-30-10-30-46 2-24 18-38Z" fill="#1e9bf0" />
        <path d="M1320 124q4 20-8 36l-18 10 14-42Z" fill="#f08a1c" />
        <path d="M1244 114q14 0 28-10 14 10 28 10 4 34-28 50-32-16-28-50Z" fill="#fff" /><circle cx="1272" cy="128" r="6.500" fill="#24304a" /><path d="M1272 130v14" stroke="#24304a" strokeWidth="6" />
        <rect x="1236" y="204" width="72" height="15" rx="7.500" fill="#f4805f" />
      </Cell>
      <Cell x={1371} className={cell}>
        <path d="m1418 112 10-8 68 52v30Z" fill="#0a7cc9" /><path d="m1418 152 10 8 68-54V78Z" fill="#1389d6" /><path d="m1496 78 25 11q3 2 3 5v76q0 3-3 5l-25 11Z" fill="#26a6f2" /><Dot x={1458} />
      </Cell>
    </div>
  );
}

function Taskbar() {
  return (
    <div className="flex h-[70px] border-t-2 border-[#464646] bg-[#202020]">
      <Cell x={0} y={630} w={1239} h={204} className="h-[68px] w-[413px]">
        <linearGradient id="sun" x1="100" y1="690" x2="150" y2="775" gradientUnits="userSpaceOnUse"><stop stopColor="#efb73a" /><stop offset="1" stopColor="#f0620a" /></linearGradient>
        <circle cx="132" cy="732" r="45" fill="url(#sun)" /><circle cx="165" cy="691" r="36" fill="#fd929b" />
        <text x="154" y="708" fontSize="48" fill="#111" fontFamily="Open Sans">1</text>
      </Cell>
      <TaskIcons />
      <div className="ml-[87px] flex">
        <Cell x={60} y={90} w={480} h={204} className="h-[68px] w-[160px]">
          <path d="m107 203 22-22 22 22" stroke="#fff" strokeWidth="5" />
          <path d="M250 215a20 20 0 0 1-4-36q10-4 16 0 10-14 26-8l-2 24Z" fill="#b9b9b9" /><path d="M254 180q12-16 28-10 12 4 14 16l-10 6Z" fill="#8a8a8a" /><path d="M246 214q-8-2-6-8l40-16q14-4 22 6 10 10 4 16-4 4-10 4h-40Z" fill="#f3f3f3" />
          <g stroke="#fff" strokeWidth="5"><path d="M382 184q35-34 70 0" /><path d="M392 195q25-24 50 0" /><path d="M402 205q15-14 30 0" /></g><circle cx="417" cy="210" r="6" fill="#fff" />
          <path d="M490 183h12l17-15v48l-17-15h-12Z" stroke="#fff" strokeWidth="4.500" strokeLinejoin="round" /><path d="M528 182q6 10 0 20" stroke="#fff" strokeWidth="4" />
        </Cell>
        <Cell x={540} y={90} w={138} h={204} className="h-[68px] w-[46px]">
          <path d="M540 172q14 20 0 40M548 165q20 26 0 54" stroke="#4d4d4d" strokeWidth="4" /><rect x="599" y="171" width="60" height="43" rx="9" stroke="#fff" strokeWidth="4.500" /><path d="M608 179h33v27h-33Z" fill="#fff" /><path d="M664 186v12" stroke="#fff" strokeWidth="7" strokeLinecap="round" />
        </Cell>
        <div className="flex w-[96px] flex-col items-end pr-px pt-[9px] text-[17.5px] leading-[24px] text-white">
          <span className="tracking-[-0.2px]">6:37 PM</span>
          <span>6/3/2024</span>
        </div>
        <Cell x={966} y={90} w={369} h={204} className="h-[68px] w-[123px]">
          <path d="M1009 206v-22q2-24 23-25 22 1 24 25v22l6 9h-59ZM1022 220h21q-2 8-10 8-9 0-11-8Z" fill="#fda07e" />
          <linearGradient id="cp1" x1="1160" y1="150" x2="1155" y2="214" gradientUnits="userSpaceOnUse"><stop stopColor="#1c9fee" /><stop offset=".5" stopColor="#38b59c" /><stop offset="1" stopColor="#f0c81e" /></linearGradient>
          <linearGradient id="cp2" x1="1235" y1="170" x2="1190" y2="215" gradientUnits="userSpaceOnUse"><stop stopColor="#a55cf0" /><stop offset=".5" stopColor="#e05bb0" /><stop offset="1" stopColor="#ff6d5a" /></linearGradient>
          <path d="M1172 144h30q12 0 16 12l4 14h-22q-8 0-12 14l-8 28h-26q-14 0-10-18l10-36q4-14 18-14Z" fill="url(#cp1)" /><path d="M1192 144h12q12 0 16 12l4 14h-20q-6 0-8 8Z" fill="#1c56d6" />
          <path d="M1206 170h28q14 4 11 20l-7 28h-46Z" fill="url(#cp2)" />
          <rect x="1167" y="214" width="81" height="32" rx="7" fill="#fecb0a" /><text x="1180" y="240" fontFamily="Open Sans" fontWeight="700" fontSize="27" fill="#111" textLength="58">PRE</text>
        </Cell>
      </div>
    </div>
  );
}

export default function App() {
  return (
    <div className="h-[1078px] w-[1915px] overflow-hidden bg-[#202020] font-['Open_Sans',sans-serif]">
      <TabStrip />
      <Toolbar />
      <Bookmarks />
      <Page />
      <Taskbar />
    </div>
  );
}
